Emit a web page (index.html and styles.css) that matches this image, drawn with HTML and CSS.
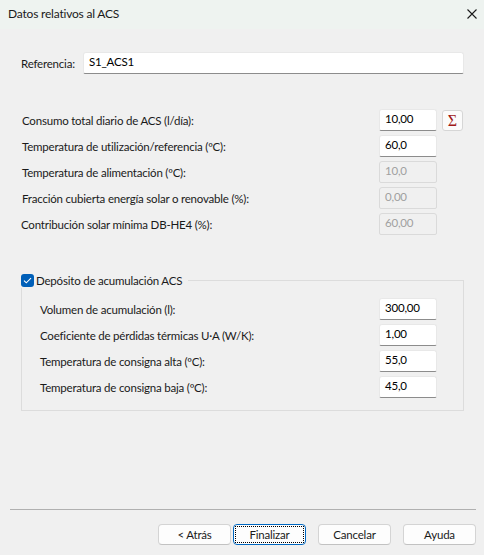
FILE: index.html
```html
<!DOCTYPE html>
<html lang="es">
<head>
<meta charset="utf-8">
<title>Datos relativos al ACS</title>
<link rel="stylesheet" href="styles.css">
</head>
<body>
<div class="titlebar">
  <span class="title">Datos relativos al ACS</span>
  <svg class="close" width="10" height="10" viewBox="0 0 10 10"><path d="M0.5 0.5L9.5 9.5M9.5 0.5L0.5 9.5" stroke="#1a1a1a" stroke-width="1.1" fill="none"/></svg>
</div>
<div class="main">
  <div class="ref-row">
    <span class="ref-label">Referencia:</span>
    <div class="input ref-input">S1_ACS1</div>
  </div>

  <div class="field-list">
    <div class="row">
      <span class="label">Consumo total diario de ACS (l/día):</span>
      <div class="input">10,00</div>
      <div class="slot"><div class="sigma">Σ</div></div>
    </div>
    <div class="row">
      <span class="label">Temperatura de utilización/referencia (ºC):</span>
      <div class="input">60,0</div>
      <div class="slot"></div>
    </div>
    <div class="row">
      <span class="label">Temperatura de alimentación (ºC):</span>
      <div class="input disabled">10,0</div>
      <div class="slot"></div>
    </div>
    <div class="row">
      <span class="label">Fracción cubierta energía solar o renovable (%):</span>
      <div class="input disabled">0,00</div>
      <div class="slot"></div>
    </div>
    <div class="row">
      <span class="label shift">Contribución solar mínima DB-HE4 (%):</span>
      <div class="input disabled">60,00</div>
      <div class="slot"></div>
    </div>
  </div>

  <fieldset class="group">
    <legend class="legend">
      <span class="checkbox"><svg width="9" height="7" viewBox="0 0 9 7"><path d="M1 3.6L3.3 5.8L8 1.2" stroke="#fff" stroke-width="1.1" fill="none"/></svg></span>
      <span>Depósito de acumulación ACS</span>
    </legend>
    <div class="group-body">
      <div class="row inner">
        <span class="label">Volumen de acumulación (l):</span>
        <div class="input">300,00</div>
      </div>
      <div class="row inner">
        <span class="label">Coeficiente de pérdidas térmicas U·A (W/K):</span>
        <div class="input">1,00</div>
      </div>
      <div class="row inner">
        <span class="label">Temperatura de consigna alta (ºC):</span>
        <div class="input">55,0</div>
      </div>
      <div class="row inner">
        <span class="label">Temperatura de consigna baja (ºC):</span>
        <div class="input">45,0</div>
      </div>
    </div>
  </fieldset>
</div>

<div class="footer">
  <div class="sep"></div>
  <div class="buttons">
    <button class="btn back">&lt; Atrás</button>
    <button class="btn default"><span class="focus">Finalizar</span></button>
    <button class="btn">Cancelar</button>
    <button class="btn">Ayuda</button>
  </div>
</div>
</body>
</html>
```
FILE: styles.css
```css
html, body {
  margin: 0;
  padding: 0;
}
body {
  width: 484px;
  height: 555px;
  background: #f0f0f0;
  font-family: Lato, "Noto Sans", sans-serif;
  font-size: 11.5px;
  letter-spacing: -0.2px;
  color: #1a1a1a;
  display: flex;
  flex-direction: column;
  overflow: hidden;
}
.titlebar {
  height: 29px;
  background: #eef3f0;
  display: flex;
  align-items: center;
  justify-content: space-between;
  padding: 0 7px 0 8px;
  flex-shrink: 0;
}
.title {
  font-size: 12px;
  color: #1a1a1a;
  margin-top: -2px;
}
.close {
  margin-top: -1px;
}
.main {
  padding: 23px 20px 0 21px;
}
.ref-row {
  display: flex;
  align-items: center;
  height: 22px;
}
.ref-label {
  width: 62px;
}
.ref-input {
  flex: 1;
  width: auto;
}
.input {
  box-sizing: border-box;
  width: 58px;
  height: 22px;
  background: #ffffff;
  border: 1px solid #e8e8e8;
  border-bottom: 1px solid #8c8c8c;
  border-radius: 3px 3px 2px 2px;
  padding: 0 5px;
  line-height: 18px;
  color: #000;
  flex-shrink: 0;
}
.input.disabled {
  background: #f0f0f0;
  border: 1px solid #dadada;
  color: #a0a0a0;
}
.field-list {
  margin-top: 35px;
  display: flex;
  flex-direction: column;
  gap: 4px;
  padding-left: 1px;
}
.row {
  display: flex;
  align-items: center;
  height: 22px;
}
.row .label {
  flex: 1;
}
.row .label.shift {
  margin-left: -1px;
}
.slot {
  width: 27px;
  flex-shrink: 0;
  display: flex;
}
.sigma {
  box-sizing: border-box;
  margin-left: 5px;
  width: 21px;
  height: 21px;
  background: #fbfbfb;
  border: 1px solid #d6d6d6;
  border-radius: 3px;
  color: #a01818;
  font-family: "Liberation Serif", "DejaVu Serif", serif;
  font-size: 16px;
  letter-spacing: 0;
  line-height: 19px;
  text-align: center;
}
.group {
  margin: 38px 0 0 0;
  padding: 0;
  border: 1px solid #dcdcdc;
  min-width: 0;
}
.legend {
  margin-left: -1px;
  padding: 0 6px 0 0;
  display: flex;
  align-items: center;
  height: 15px;
}
.checkbox {
  box-sizing: border-box;
  width: 13px;
  height: 13px;
  background: #005fb8;
  border-radius: 3px;
  display: flex;
  align-items: center;
  justify-content: center;
  margin-right: 2px;
}
.group-body {
  padding: 10px 26px 12px 18px;
  display: flex;
  flex-direction: column;
  gap: 4px;
}
.footer {
  margin-top: auto;
  padding: 0 8px 10px 10px;
}
.sep {
  height: 1px;
  background: #b0b0b0;
}
.buttons {
  margin-top: 14px;
  display: flex;
  justify-content: flex-end;
  gap: 12px;
}
.btn {
  box-sizing: border-box;
  width: 73px;
  height: 21px;
  background: #fdfdfd;
  border: 1px solid #d4d4d4;
  border-bottom-color: #c2c2c2;
  border-radius: 4px;
  font-family: inherit;
  font-size: 11.5px;
  letter-spacing: -0.2px;
  color: #1a1a1a;
  padding: 0;
  display: flex;
  align-items: center;
  justify-content: center;
}
.btn.back {
  margin-right: -10px;
}
.btn.default {
  border: 1px solid #0067c0;
  padding: 1px;
}
.focus {
  box-sizing: border-box;
  width: 100%;
  height: 100%;
  border: 1px dotted #000;
  display: flex;
  align-items: center;
  justify-content: center;
}
```
